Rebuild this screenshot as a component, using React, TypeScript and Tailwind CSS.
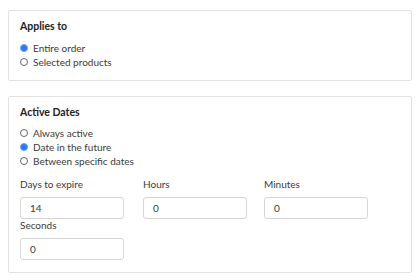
import React from 'react'

const font = { fontFamily: 'Lato, "Open Sans", sans-serif' }

function Radio({ label, checked }: { label: string; checked?: boolean }) {
    return (
        <label className="flex items-center h-[14px] gap-[5px] text-[10px] text-[#3a3a3a]">
            {checked ? (
                <span className="w-[8px] h-[8px] rounded-full bg-[#2c78f0] border border-[#6aa3f5]" />
            ) : (
                <span className="w-[8px] h-[8px] rounded-full border border-[#666] bg-white" />
            )}
            <span>{label}</span>
        </label>
    )
}

function Field({ label, value }: { label: string; value: string }) {
    return (
        <div className="flex flex-col">
            <span className="text-[10px] leading-[12px] text-[#3a3a3a]">{label}</span>
            <div className="mt-[7px] w-[104px] h-[22px] border border-[#d6d6d6] rounded-[3px] bg-white flex items-center pl-[9px] text-[10px] text-[#3a3a3a]">
                {value}
            </div>
        </div>
    )
}

export default function App() {
    return (
        <div className="w-[420px] h-[280px] bg-white pt-[10px] px-[8px]" style={font}>
            {/* Applies to */}
            <div className="border border-[#e2e2e2] rounded-[2px] pt-[8px] pb-[11px] px-[11px]">
                <div className="text-[10.5px] leading-[14px] font-bold text-[#222]">Applies to</div>
                <div className="mt-[8px] flex flex-col">
                    <Radio label="Entire order" checked />
                    <Radio label="Selected products" />
                </div>
            </div>

            {/* Active Dates */}
            <div className="mt-[15px] border border-[#e2e2e2] rounded-[2px] pt-[8px] pb-[12px] px-[11px]">
                <div className="text-[10.5px] leading-[14px] font-bold text-[#222]">Active Dates</div>
                <div className="mt-[7px] flex flex-col">
                    <Radio label="Always active" />
                    <Radio label="Date in the future" checked />
                    <Radio label="Between specific dates" />
                </div>
                <div className="mt-[10px] grid grid-cols-[123px_121px_1fr]">
                    <Field label="Days to expire" value="14" />
                    <Field label="Hours" value="0" />
                    <Field label="Minutes" value="0" />
                    <Field label="Seconds" value="0" />
                </div>
            </div>
        </div>
    )
}
